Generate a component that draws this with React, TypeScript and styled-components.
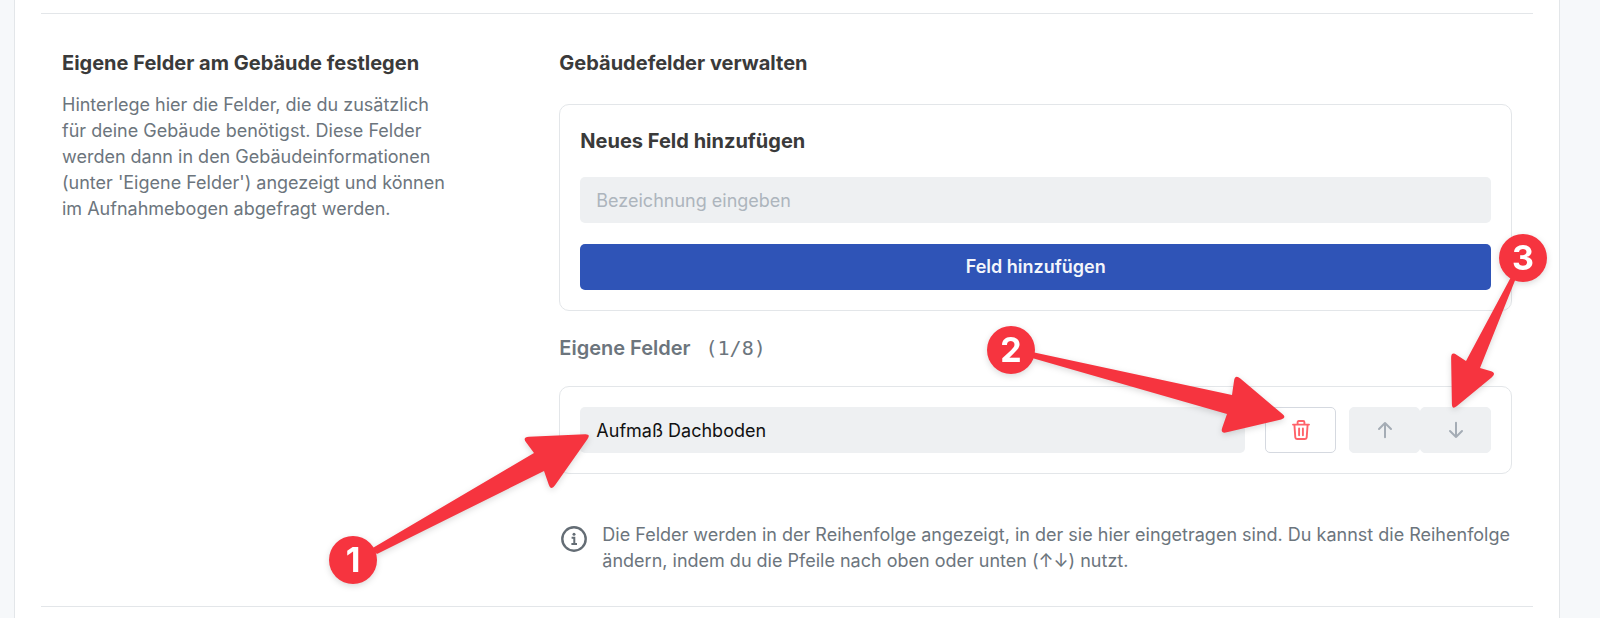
import React from "react";
import styled, { createGlobalStyle } from "styled-components";

const GlobalStyle = createGlobalStyle`
  *, *::before, *::after { box-sizing: border-box; }
  body {
    margin: 0;
    background: #f6f8fa;
    color: #3a3a3a;
    font-family: Inter, "Liberation Sans", sans-serif;
    font-size: 18px;
    line-height: 26px;
  }
`;

const Panel = styled.main`
  min-height: 100vh;
  margin: 0 40px 0 14px;
  padding: 13px 26px 0;
  background: #ffffff;
  border: solid #e3e6e9;
  border-width: 0 1px;
`;

const Section = styled.section`
  display: grid;
  grid-template-columns: minmax(0, 1fr) minmax(0, 2fr);
  padding: 35px 0 32px;
  border: solid #e3e6e9;
  border-width: 1px 0;
`;

const Column = styled.div`
  padding: 0 21px;
`;

const Title = styled.h2`
  margin: 0;
  font-size: 20px;
  line-height: 28px;
  font-weight: 700;
`;

const ListTitle = styled.h3`
  margin: 0;
  font-size: 20px;
  line-height: 28px;
  font-weight: 600;
`;

const Description = styled.p`
  max-width: 390px;
  margin: 15px 0 0;
  color: #6c757d;
`;

const Card = styled.div`
  padding: 20px;
  border: 1px solid #e3e6e9;
  border-radius: 10px;
`;

const NewFieldCard = styled(Card)`
  display: flex;
  flex-direction: column;
  margin-top: 27px;
`;

const CardTitle = styled.label`
  margin: 2px 0 22px;
  font-size: 20px;
  line-height: 28px;
  font-weight: 700;
`;

const TextField = styled.input`
  display: block;
  width: 100%;
  height: 46px;
  padding: 0 16px;
  border: 0;
  border-radius: 5px;
  background: #eef0f2;
  color: #111111;
  font: inherit;
  &::placeholder { color: #adb5bd; opacity: 1; }
`;

const PrimaryButton = styled.button`
  height: 46px;
  margin-top: 21px;
  border: 0;
  border-radius: 5px;
  background: #2f54b7;
  color: #f4f6fb;
  font: inherit;
  font-weight: 600;
`;

const ListHeading = styled.div`
  display: flex;
  align-items: baseline;
  gap: 15px;
  margin: 23px 0 24px;
  color: #6c757d;
`;

const Counter = styled.span`
  font-family: "DejaVu Sans Mono", monospace;
  font-size: 20px;
  line-height: 28px;
`;

const FieldRow = styled(Card)`
  display: flex;
  align-items: center;
`;

const Anchor = styled.div<{ $grow?: boolean }>`
  position: relative;
  flex: ${(p) => (p.$grow ? "1 1 auto" : "none")};
`;

const IconButton = styled.button<{ $tone: "danger" | "muted" }>`
  display: flex;
  align-items: center;
  justify-content: center;
  width: 71px;
  height: 46px;
  padding: 0;
  border: 1px solid ${(p) => (p.$tone === "danger" ? "#d5d9e0" : "#eef0f2")};
  border-radius: 5px;
  background: ${(p) => (p.$tone === "danger" ? "#ffffff" : "#eef0f2")};
  color: ${(p) => (p.$tone === "danger" ? "#ff6269" : "#a4acb5")};
`;

const Actions = styled.div`
  display: flex;
  flex: none;
  margin-left: 20px;
`;

const MoveGroup = styled.div`
  display: flex;
  margin-left: 13px;
`;

const Note = styled.div`
  display: flex;
  align-items: flex-start;
  gap: 15px;
  margin-top: 48px;
  color: #6c757d;
  svg { flex: none; margin: 4px 0 0 2px; }
  p { margin: 0; }
`;

const Overlay = styled.svg`
  position: absolute;
  top: 0;
  left: 0;
  width: 1px;
  height: 1px;
  overflow: visible;
  z-index: 1;
  pointer-events: none;
  filter: drop-shadow(0 2px 3px rgba(0, 0, 0, 0.15));
`;

const BadgeNumber = styled.text`
  font-size: 34px;
  font-weight: 700;
  fill: #ffffff;
  text-anchor: middle;
`;

type Point = [x: number, y: number, radius: number];

/* Closed polygon whose corners are rounded by each point's radius. */
function roundedPolygon(points: Point[]): string {
  const n = points.length;
  const toward = (a: Point, b: Point, d: number) => {
    const len = Math.hypot(b[0] - a[0], b[1] - a[1]);
    return `${a[0] + ((b[0] - a[0]) * d) / len} ${a[1] + ((b[1] - a[1]) * d) / len}`;
  };
  return (
    points
      .map((p, i) => {
        const start = toward(p, points[(i + n - 1) % n], p[2]);
        const end = toward(p, points[(i + 1) % n], p[2]);
        return `${i === 0 ? "M" : "L"}${start}Q${p[0]} ${p[1]} ${end}`;
      })
      .join("") + "Z"
  );
}

interface CalloutProps {
  label: string;
  center: [number, number];
  arrow: Point[];
}

function Callout({ label, center: [cx, cy], arrow }: CalloutProps) {
  return (
    <Overlay>
      <g fill="#f6343f">
        <path d={roundedPolygon(arrow)} />
        <circle cx={cx} cy={cy} r="24" />
      </g>
      <BadgeNumber x={cx} y={cy + 12}>{label}</BadgeNumber>
    </Overlay>
  );
}

const nameArrow: Point[] = [
  [11, 27, 6], [-58, 30, 7], [-46, 46, 0], [-209, 142, 0],
  [-203, 147, 0], [-36, 64, 0], [-29, 84, 7],
];
const deleteArrow: Point[] = [
  [22, 11, 6], [-30, -33, 7], [-33, -12, 0], [-233, -55, 0],
  [-233, -49, 0], [-38, 7, 0], [-45, 27, 7],
];
const moveArrow: Point[] = [
  [32, 3, 6], [31, -56, 7], [46, -46, 0], [91, -130, 0],
  [96, -129, 0], [60, -39, 0], [77, -34, 7],
];

const TrashIcon = () => (
  <svg width="18" height="20" viewBox="0 0 18 20" fill="none" stroke="currentColor" strokeWidth="1.9" strokeLinecap="round" strokeLinejoin="round" aria-hidden="true">
    <path d="M1 4.6H17M5.6 4.4V2.2Q5.6 1 6.8 1H11.2Q12.4 1 12.4 2.2V4.4M2.4 4.8L3.3 17.4Q3.4 19 5 19H13Q14.6 19 14.7 17.4L15.6 4.8M7.1 8.5V15.2M10.9 8.5V15.2" />
  </svg>
);

const ArrowIcon = ({ down }: { down?: boolean }) => (
  <svg width="16" height="18" viewBox="0 0 16 18" fill="none" stroke="currentColor" strokeWidth="2" strokeLinecap="round" strokeLinejoin="round" aria-hidden="true">
    <path d={down ? "M8 1.8V16M2 10L8 16L14 10" : "M8 16.2V2M2 8L8 2L14 8"} />
  </svg>
);

const InfoIcon = () => (
  <svg width="26" height="26" viewBox="0 0 26 26" fill="none" stroke="#646d75" strokeWidth="2.4" aria-hidden="true">
    <circle cx="13" cy="13" r="11.7" />
    <path d="M10.6 11.8H13.3V18M10.4 18H16" strokeWidth="2" />
    <circle cx="13" cy="8.2" r="1.5" fill="#646d75" stroke="none" />
  </svg>
);

export default function App() {
  return (
    <>
      <GlobalStyle />
      <Panel>
        <Section>
          <Column>
            <Title>Eigene Felder am Gebäude festlegen</Title>
            <Description>
              Hinterlege hier die Felder, die du zusätzlich für deine Gebäude benötigst. Diese Felder
              werden dann in den Gebäudeinformationen (unter 'Eigene Felder') angezeigt und können im
              Aufnahmebogen abgefragt werden.
            </Description>
          </Column>
          <Column>
            <Title>Gebäudefelder verwalten</Title>
            <NewFieldCard as="form" onSubmit={(e: React.FormEvent) => e.preventDefault()}>
              <CardTitle htmlFor="new-field">Neues Feld hinzufügen</CardTitle>
              <TextField id="new-field" placeholder="Bezeichnung eingeben" />
              <PrimaryButton type="submit">Feld hinzufügen</PrimaryButton>
            </NewFieldCard>
            <ListHeading>
              <ListTitle>Eigene Felder</ListTitle>
              <Counter>(1/8)</Counter>
            </ListHeading>
            <FieldRow>
              <Anchor $grow>
                <TextField aria-label="Bezeichnung" defaultValue="Aufmaß Dachboden" />
                <Callout label="1" center={[-227, 153]} arrow={nameArrow} />
              </Anchor>
              <Actions>
                <Anchor>
                  <IconButton type="button" $tone="danger" aria-label="Löschen"><TrashIcon /></IconButton>
                  <Callout label="2" center={[-254, -57]} arrow={deleteArrow} />
                </Anchor>
                <MoveGroup>
                  <IconButton type="button" $tone="muted" aria-label="Nach oben"><ArrowIcon /></IconButton>
                  <Anchor>
                    <IconButton type="button" $tone="muted" aria-label="Nach unten"><ArrowIcon down /></IconButton>
                    <Callout label="3" center={[103, -149]} arrow={moveArrow} />
                  </Anchor>
                </MoveGroup>
              </Actions>
            </FieldRow>
            <Note>
              <InfoIcon />
              <p>
                Die Felder werden in der Reihenfolge angezeigt, in der sie hier eingetragen sind. Du
                kannst die Reihenfolge ändern, indem du die Pfeile nach oben oder unten (↑↓) nutzt.
              </p>
            </Note>
          </Column>
        </Section>
      </Panel>
    </>
  );
}
